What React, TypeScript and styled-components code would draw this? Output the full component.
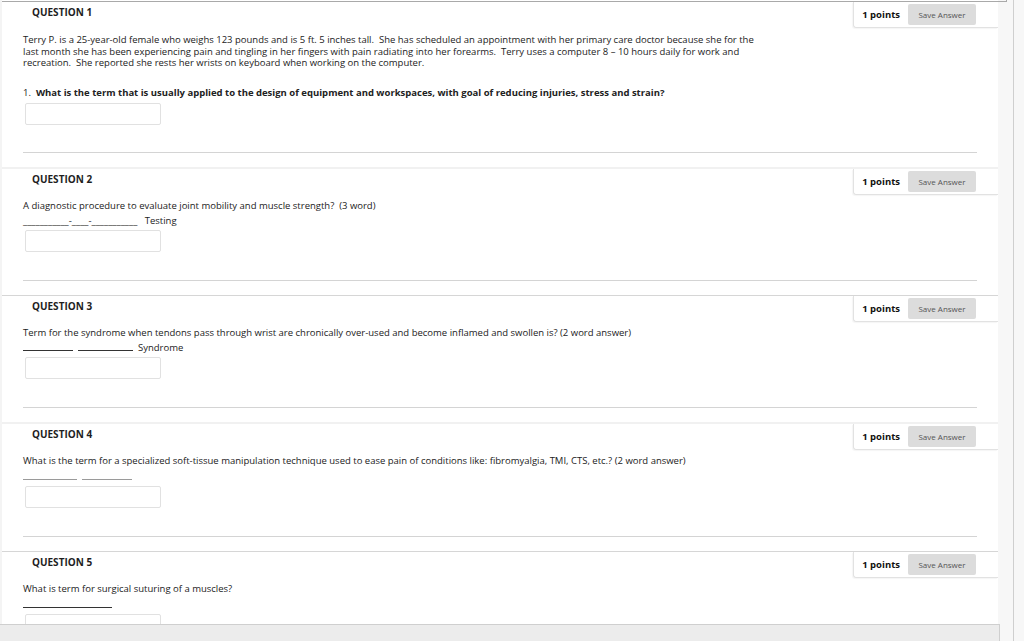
import React from 'react';
import styled, { createGlobalStyle } from 'styled-components';

const GlobalStyle = createGlobalStyle`
    html, body {
        margin: 0;
        padding: 0;
        background: #ffffff;
    }
    body {
        font-family: "Open Sans", "Noto Sans", sans-serif;
        color: #222;
    }
`;

const Page = styled.div`
    position: relative;
    display: flex;
    width: 1024px;
    height: 641px;
    overflow: hidden;
`;

const Main = styled.div`
    width: 998px;
    display: flex;
    flex-direction: column;
    border-left: 2px solid #f4f4f4;
    box-sizing: border-box;
`;

const PrevEdge = styled.div`
    position: relative;
    z-index: 1;
    width: 1005px;
    height: 2px;
    flex-shrink: 0;
    border-bottom: 1px solid #a9a9a9;
    border-right: 1px solid #a9a9a9;
    box-sizing: border-box;
`;

const Gutter = styled.div`
    flex: 1;
    display: flex;
    background: #f7f7f7;
`;

const GutterLine = styled.div`
    margin-left: 15px;
    width: 1px;
    background: #cfcfcf;
`;

type BlockProps = { $soft?: boolean; $first?: boolean };

const Block = styled.div<BlockProps>`
    flex-shrink: 0;
    border-top: ${(p) => (p.$first ? 'none' : p.$soft ? '2px solid #f1f1f1' : '1px solid #d6d6d6')};
    padding: 0 0 14px 21px;
`;

const HeaderRow = styled.div`
    display: flex;
    justify-content: space-between;
    align-items: flex-start;
    height: 28px;
`;

const Title = styled.div`
    font-size: 10px;
    font-weight: 700;
    padding: 3px 0 0 9px;
    color: #1e1e1e;
`;

const PointsBox = styled.div`
    display: flex;
    align-items: center;
    gap: 8px;
    height: 26px;
    padding: 0 22px 0 8px;
    border-left: 1px solid #e2e2e2;
    border-bottom: 1px solid #e2e2e2;
    border-bottom-left-radius: 3px;
    box-shadow: -1px 1px 1px rgba(0, 0, 0, 0.04);
    box-sizing: border-box;
`;

const Points = styled.span`
    font-size: 9.5px;
    font-weight: 700;
    color: #111;
`;

const SaveButton = styled.button`
    font-family: "Open Sans", sans-serif;
    font-size: 8px;
    color: #555;
    background: #dcdcdc;
    border: none;
    border-radius: 2px;
    height: 21px;
    width: 68px;
    padding: 0;
`;

const Body = styled.div<{ $top: number }>`
    padding-top: ${(p) => p.$top}px;
    font-size: 9.5px;
    line-height: 11.5px;
    color: #222;
`;

const Para = styled.p<{ $gap?: number }>`
    margin: 0 0 ${(p) => p.$gap ?? 0}px 0;
    white-space: nowrap;
`;

const Bold = styled.span`
    font-weight: 700;
`;

const Blank = styled.span<{ $w: number; $color?: string }>`
    display: inline-block;
    width: ${(p) => p.$w}px;
    border-bottom: 1px solid ${(p) => p.$color ?? '#333'};
    margin-right: 5px;
    vertical-align: baseline;
`;

const AnswerInput = styled.div`
    width: 136px;
    height: 22px;
    margin-left: 2px;
    border: 1px solid #e1e1e1;
    border-radius: 2px;
    box-sizing: border-box;
    background: #fff;
`;

const Divider = styled.div<{ $top: number }>`
    margin-top: ${(p) => p.$top}px;
    margin-right: 21px;
    height: 1px;
    background: #d4d4d4;
`;

const Footer = styled.div`
    position: absolute;
    left: 0;
    bottom: 0;
    width: 1000px;
    height: 17px;
    background: #ececec;
    border-top: 1px solid #cfcfcf;
    border-right: 1px solid #cfcfcf;
    box-sizing: border-box;
`;

type QuestionProps = {
    number: number;
    soft?: boolean;
    first?: boolean;
    top: number;
    afterInput: number;
    children: React.ReactNode;
};

const Question: React.FC<QuestionProps> = (props) => {
    return (
        <Block $soft={props.soft} $first={props.first}>
            <HeaderRow>
                <Title>QUESTION {props.number}</Title>
                <PointsBox>
                    <Points>1 points</Points>
                    <SaveButton>Save Answer</SaveButton>
                </PointsBox>
            </HeaderRow>
            <Body $top={props.top}>
                {props.children}
                <AnswerInput />
            </Body>
            <Divider $top={props.afterInput} />
        </Block>
    );
};

const App: React.FC = () => {
    return (
        <Page>
            <GlobalStyle />
            <Main>
                <PrevEdge />
                <Question number={1} first top={4} afterInput={27}>
                    <Para>
                        Terry P. is a 25-year-old female who weighs 123 pounds and is 5 ft. 5 inches tall.&nbsp; She has scheduled an appointment with her primary care doctor because she for the
                    </Para>
                    <Para>
                        last month she has been experiencing pain and tingling in her fingers with pain radiating into her forearms.&nbsp; Terry uses a computer 8 – 10 hours daily for work and
                    </Para>
                    <Para $gap={18}>
                        recreation.&nbsp; She reported she rests her wrists on keyboard when working on the computer.
                    </Para>
                    <Para $gap={5}>
                        1.&nbsp; <Bold>What is the term that is usually applied to the design of equipment and workspaces, with goal of reducing injuries, stress and strain?</Bold>
                    </Para>
                </Question>
                <Question number={2} soft top={3} afterInput={28}>
                    <Para $gap={3}>A diagnostic procedure to evaluate joint mobility and muscle strength?&nbsp; (3 word)</Para>
                    <Para $gap={4}>
                        ___________-____-___________&nbsp;&nbsp; Testing
                    </Para>
                </Question>
                <Question number={3} top={3} afterInput={28}>
                    <Para $gap={3}>Term for the syndrome when tendons pass through wrist are chronically over-used and become inflamed and swollen is? (2 word answer)</Para>
                    <Para $gap={4}>
                        <Blank $w={50} />
                        <Blank $w={55} />
                        Syndrome
                    </Para>
                </Question>
                <Question number={4} soft top={3} afterInput={28}>
                    <Para $gap={4}>What is the term for a specialized soft-tissue manipulation technique used to ease pain of conditions like: fibromyalgia, TMI, CTS, etc.? (2 word answer)</Para>
                    <Para $gap={4}>
                        <Blank $w={54} $color="#9a9a9a" />
                        <Blank $w={50} $color="#9a9a9a" />
                    </Para>
                </Question>
                <Question number={5} top={3} afterInput={28}>
                    <Para $gap={4}>What is term for surgical suturing of a muscles?</Para>
                    <Para $gap={4}>
                        <Blank $w={89} />
                    </Para>
                </Question>
            </Main>
            <Gutter>
                <GutterLine />
            </Gutter>
            <Footer />
        </Page>
    );
};

export default App;
